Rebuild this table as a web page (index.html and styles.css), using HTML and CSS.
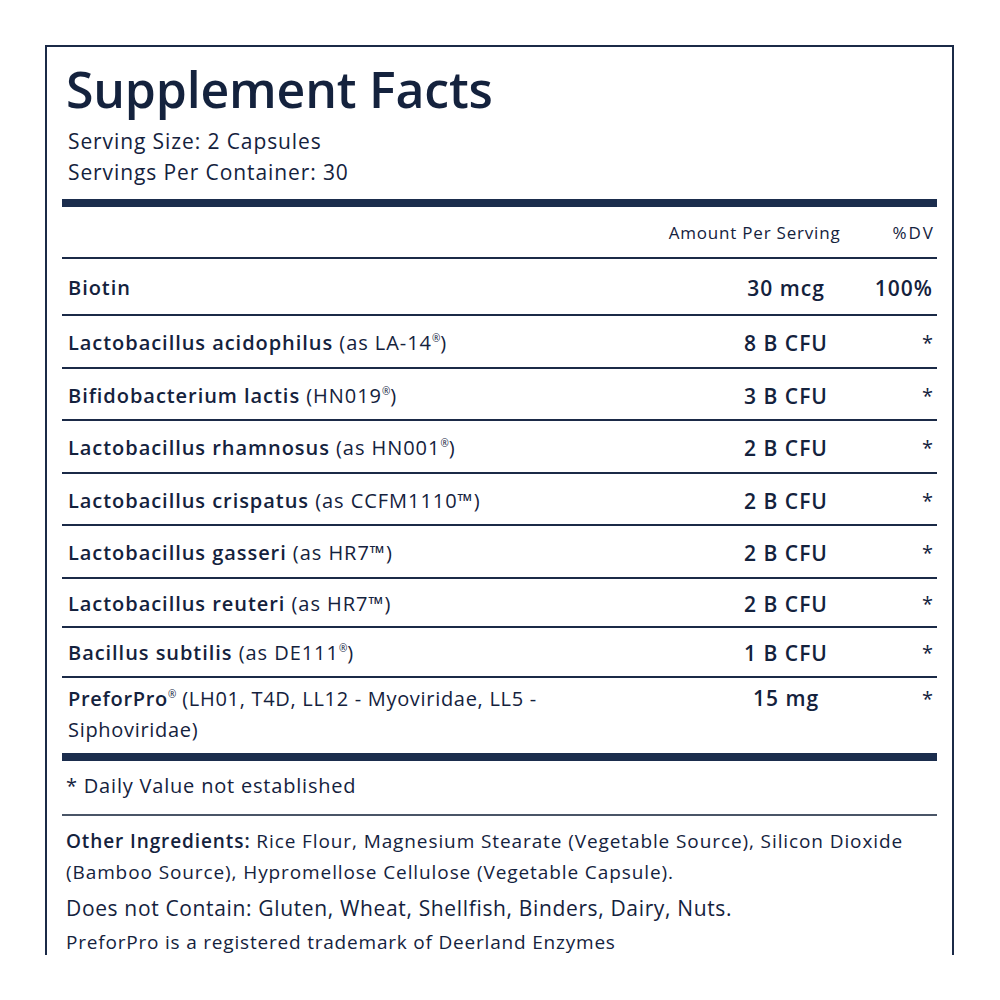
FILE: index.html
```html
<!DOCTYPE html>
<html>
<head>
<meta charset="utf-8">
<link rel="stylesheet" href="styles.css">
</head>
<body>
<div class="panel">
  <h1 class="title">Supplement Facts</h1>
  <div class="serving">
    <div>Serving Size: 2 Capsules</div>
    <div>Servings Per Container: 30</div>
  </div>
  <div class="bar"></div>
  <div class="head">
    <span class="head-amt">Amount Per Serving</span>
    <span class="head-dv">%DV</span>
  </div>
  <div class="row row-first">
    <div class="name"><b>Biotin</b></div>
    <div class="amt">30 mcg</div>
    <div class="dv">100%</div>
  </div>
  <div class="row">
    <div class="name"><b>Lactobacillus acidophilus</b> (as LA-14<sup>®</sup>)</div>
    <div class="amt">8 B CFU</div>
    <div class="dv">*</div>
  </div>
  <div class="row">
    <div class="name"><b>Bifidobacterium lactis</b> (HN019<sup>®</sup>)</div>
    <div class="amt">3 B CFU</div>
    <div class="dv">*</div>
  </div>
  <div class="row">
    <div class="name"><b>Lactobacillus rhamnosus</b> (as HN001<sup>®</sup>)</div>
    <div class="amt">2 B CFU</div>
    <div class="dv">*</div>
  </div>
  <div class="row">
    <div class="name"><b>Lactobacillus crispatus</b> (as CCFM1110™)</div>
    <div class="amt">2 B CFU</div>
    <div class="dv">*</div>
  </div>
  <div class="row">
    <div class="name"><b>Lactobacillus gasseri</b> (as HR7™)</div>
    <div class="amt">2 B CFU</div>
    <div class="dv">*</div>
  </div>
  <div class="row row-tight">
    <div class="name"><b>Lactobacillus reuteri</b> (as HR7™)</div>
    <div class="amt">2 B CFU</div>
    <div class="dv">*</div>
  </div>
  <div class="row row-tight">
    <div class="name"><b>Bacillus subtilis</b> (as DE111<sup>®</sup>)</div>
    <div class="amt">1 B CFU</div>
    <div class="dv">*</div>
  </div>
  <div class="row row-last">
    <div class="name"><b>PreforPro</b><sup>®</sup> (LH01, T4D, LL12 - Myoviridae, LL5 -<br>Siphoviridae)</div>
    <div class="amt">15 mg</div>
    <div class="dv">*</div>
  </div>
  <div class="bar bar-end"></div>
  <div class="note">* Daily Value not established</div>
  <div class="rule"></div>
  <div class="other">
    <p class="ingredients"><b>Other Ingredients:</b> Rice Flour, Magnesium Stearate (Vegetable Source), Silicon Dioxide<br>(Bamboo Source), Hypromellose Cellulose (Vegetable Capsule).</p>
    <p class="contain">Does not Contain: Gluten, Wheat, Shellfish, Binders, Dairy, Nuts.</p>
    <p class="tm">PreforPro is a registered trademark of Deerland Enzymes</p>
  </div>
</div>
</body>
</html>
```

FILE: styles.css
```css
* { box-sizing: border-box; }
html, body { margin: 0; padding: 0; background: #ffffff; }
body {
  font-family: "Open Sans", Lato, sans-serif;
  color: #14223d;
  width: 1000px;
  height: 1000px;
  overflow: hidden;
}
.panel {
  margin: 45px 0 0 45px;
  width: 909px;
  height: 910px;
  border: 2px solid #1b2a47;
  border-bottom: 0;
  padding: 0 15px;
}
.title {
  margin: 0;
  padding: 12px 0 0 4px;
  font-size: 50px;
  line-height: 60px;
  font-weight: 600;
  letter-spacing: -0.2px;
}
.serving {
  padding: 7px 0 0 6px;
  font-size: 21px;
  line-height: 31px;
  letter-spacing: 0.9px;
}
.bar {
  height: 8px;
  background: #1b2d4d;
  margin-top: 11px;
}
.head {
  display: flex;
  justify-content: flex-end;
  align-items: center;
  height: 52px;
  border-bottom: 2px solid #1b2a47;
  font-size: 17px;
  letter-spacing: 0.8px;
  padding-right: 2px;
}
.head-dv { margin-left: 52px; letter-spacing: 2px; }
.row {
  display: grid;
  grid-template-columns: 1fr 100px 97px;
  align-items: start;
  border-bottom: 2px solid #1b2a47;
  font-size: 20px;
  line-height: 26px;
  letter-spacing: 0.95px;
  padding: 14px 4px 10.5px 6px;
}
.row b { font-weight: 600; }
.row-first { padding: 16px 4px 13px 6px; }
.row-tight { padding: 12px 4px 9.5px 6px; }
.row-last { border-bottom: 0; padding: 5px 4px 8px 6px; line-height: 31px; letter-spacing: 0.7px; }
.name sup { font-size: 10px; line-height: 0; vertical-align: 8px; letter-spacing: 0; }
.amt { text-align: center; font-weight: 600; font-size: 21px; letter-spacing: 1px; }
.dv { text-align: right; font-size: 20px; letter-spacing: 0; }
.row-first .dv { font-weight: 600; font-size: 21px; letter-spacing: 1px; }
.bar-end { margin-top: 0; }
.note {
  padding: 13px 0 0 4px;
  height: 53px;
  font-size: 20px;
  line-height: 24px;
  letter-spacing: 0.8px;
}
.rule { height: 2px; background: #4a5567; }
.other { padding: 10px 0 0 4px; }
.other p { margin: 0; }
.ingredients { font-size: 19px; line-height: 31px; letter-spacing: 0.9px; }
.ingredients b { font-weight: 600; }
.contain { font-size: 21px; line-height: 41px; letter-spacing: 0.65px; }
.tm { font-size: 19px; line-height: 27px; letter-spacing: 0.8px; }
```
